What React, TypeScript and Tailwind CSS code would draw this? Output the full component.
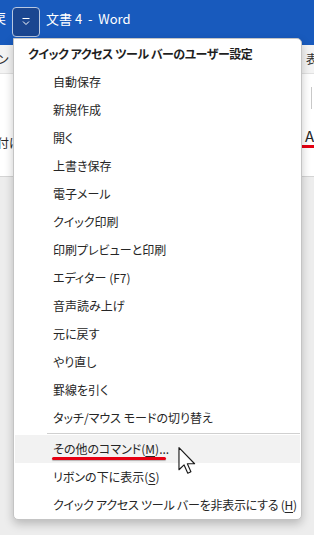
const ITEMS = [
  '自動保存',
  '新規作成',
  '開く',
  '上書き保存',
  '電子メール',
  'クイック印刷',
  '印刷プレビューと印刷',
  'エディター (F7)',
  '音声読み上げ',
  '元に戻す',
  'やり直し',
  '罫線を引く',
  'タッチ/マウス モードの切り替え',
]

function QatIcon() {
  return (
    <svg width="10" height="8" viewBox="0 0 10 8" fill="none" stroke="white" strokeWidth="1">
      <path d="M1.5 0.5h7" />
      <path d="M2 3.5l3 3 3-3" />
    </svg>
  )
}

function Cursor() {
  return (
    <svg width="19" height="27" viewBox="0 0 13 19" className="absolute left-[178px] top-[447px]">
      <path
        d="M0.5 0.5v15.5l3.6-3.4 2.6 5.8 2.2-1-2.5-5.6h5.1z"
        fill="white"
        stroke="#1a1a1a"
        strokeWidth="0.8"
        strokeLinejoin="round"
      />
    </svg>
  )
}

function MenuRow({ children, active }: { children: React.ReactNode; active?: boolean }) {
  return (
    <div
      className={`mx-[1px] flex h-[28px] items-center whitespace-nowrap pl-[38px] text-[12px] text-[#262626] ${
        active ? 'bg-[#f2f2f2]' : ''
      }`}
    >
      {children}
    </div>
  )
}

export default function App() {
  return (
    <div
      className="relative h-[535px] w-[314px] overflow-hidden bg-[#ededed] [font-feature-settings:'palt']"
      style={{ fontFamily: '"Noto Sans CJK JP", "Liberation Sans", sans-serif' }}
    >
      {/* title bar */}
      <div className="flex h-[45px] items-start bg-[#185abd] pt-[7px] text-white">
        <span className="-ml-[7px] mt-[4px] text-[13px] leading-none">戻</span>
        <div className="ml-[6px] flex h-[30px] w-[28px] items-center justify-center rounded-[4px] border border-[#b8c8e2] bg-[#1b4690]">
          <QatIcon />
        </div>
        <span className="ml-[6px] mt-[5px] whitespace-pre text-[13px] leading-none">
          文書 4  -  Word
        </span>
      </div>

      {/* ribbon */}
      <div className="flex h-[29px] items-center justify-between border-b border-[#e1e1e1] bg-[#f3f3f3] text-[12px] text-[#333]">
        <span className="-ml-[2px]">ン</span>
        <span className="-mr-[4px]">表</span>
      </div>
      <div className="relative flex h-[103px] justify-between border-b border-[#d4d4d4] bg-white text-[12px] text-[#262626]">
        <span className="-ml-[3px] mt-[60px]">付に</span>
        <div className="flex flex-col items-end">
          <div className="mr-[2px] mt-[13px] h-[22px] w-px bg-[#c8c8c8]" />
          <div className="mt-[19px] flex flex-col items-center">
            <span className="-mr-[3px] text-[15px] leading-none">A</span>
            <div className="mt-[2px] h-[3px] w-[12px] bg-[#e60012]" />
          </div>
        </div>
      </div>

      {/* QAT customize menu */}
      <div className="absolute left-[13px] top-[38px] w-[289px] rounded-b-[5px] rounded-tr-[5px] border border-[#c4c4c4] bg-white shadow-[0_4px_10px_rgba(0,0,0,0.22)]">
        <div className="flex h-[29px] items-center whitespace-nowrap pl-[14px] text-[12px] font-bold tracking-[-0.04em] text-[#1f1f1f]">
          クイック アクセス ツール バーのユーザー設定
        </div>
        {ITEMS.map((label) => (
          <MenuRow key={label}>{label}</MenuRow>
        ))}
        <div className="ml-[33px] mr-[1px] mt-px h-px bg-[#d0d0d0]" />
        <div className="mt-px">
          <MenuRow active>
            <span className="relative">
              その他のコマンド(<span className="underline underline-offset-2">M</span>)...
              <span className="absolute -left-[1px] top-[17px] h-[3px] w-[114px] rounded-full bg-[#e60012] shadow-[0_1px_1px_rgba(0,0,0,0.25)]" />
            </span>
          </MenuRow>
        </div>
        <MenuRow>
          <span>
            リボンの下に表示(<span className="underline underline-offset-2">S</span>)
          </span>
        </MenuRow>
        <MenuRow>
          <span className="tracking-[-0.02em]">
            クイック アクセス ツール バーを非表示にする (<span className="underline underline-offset-2">H</span>)
          </span>
        </MenuRow>
      </div>

      <Cursor />
    </div>
  )
}
